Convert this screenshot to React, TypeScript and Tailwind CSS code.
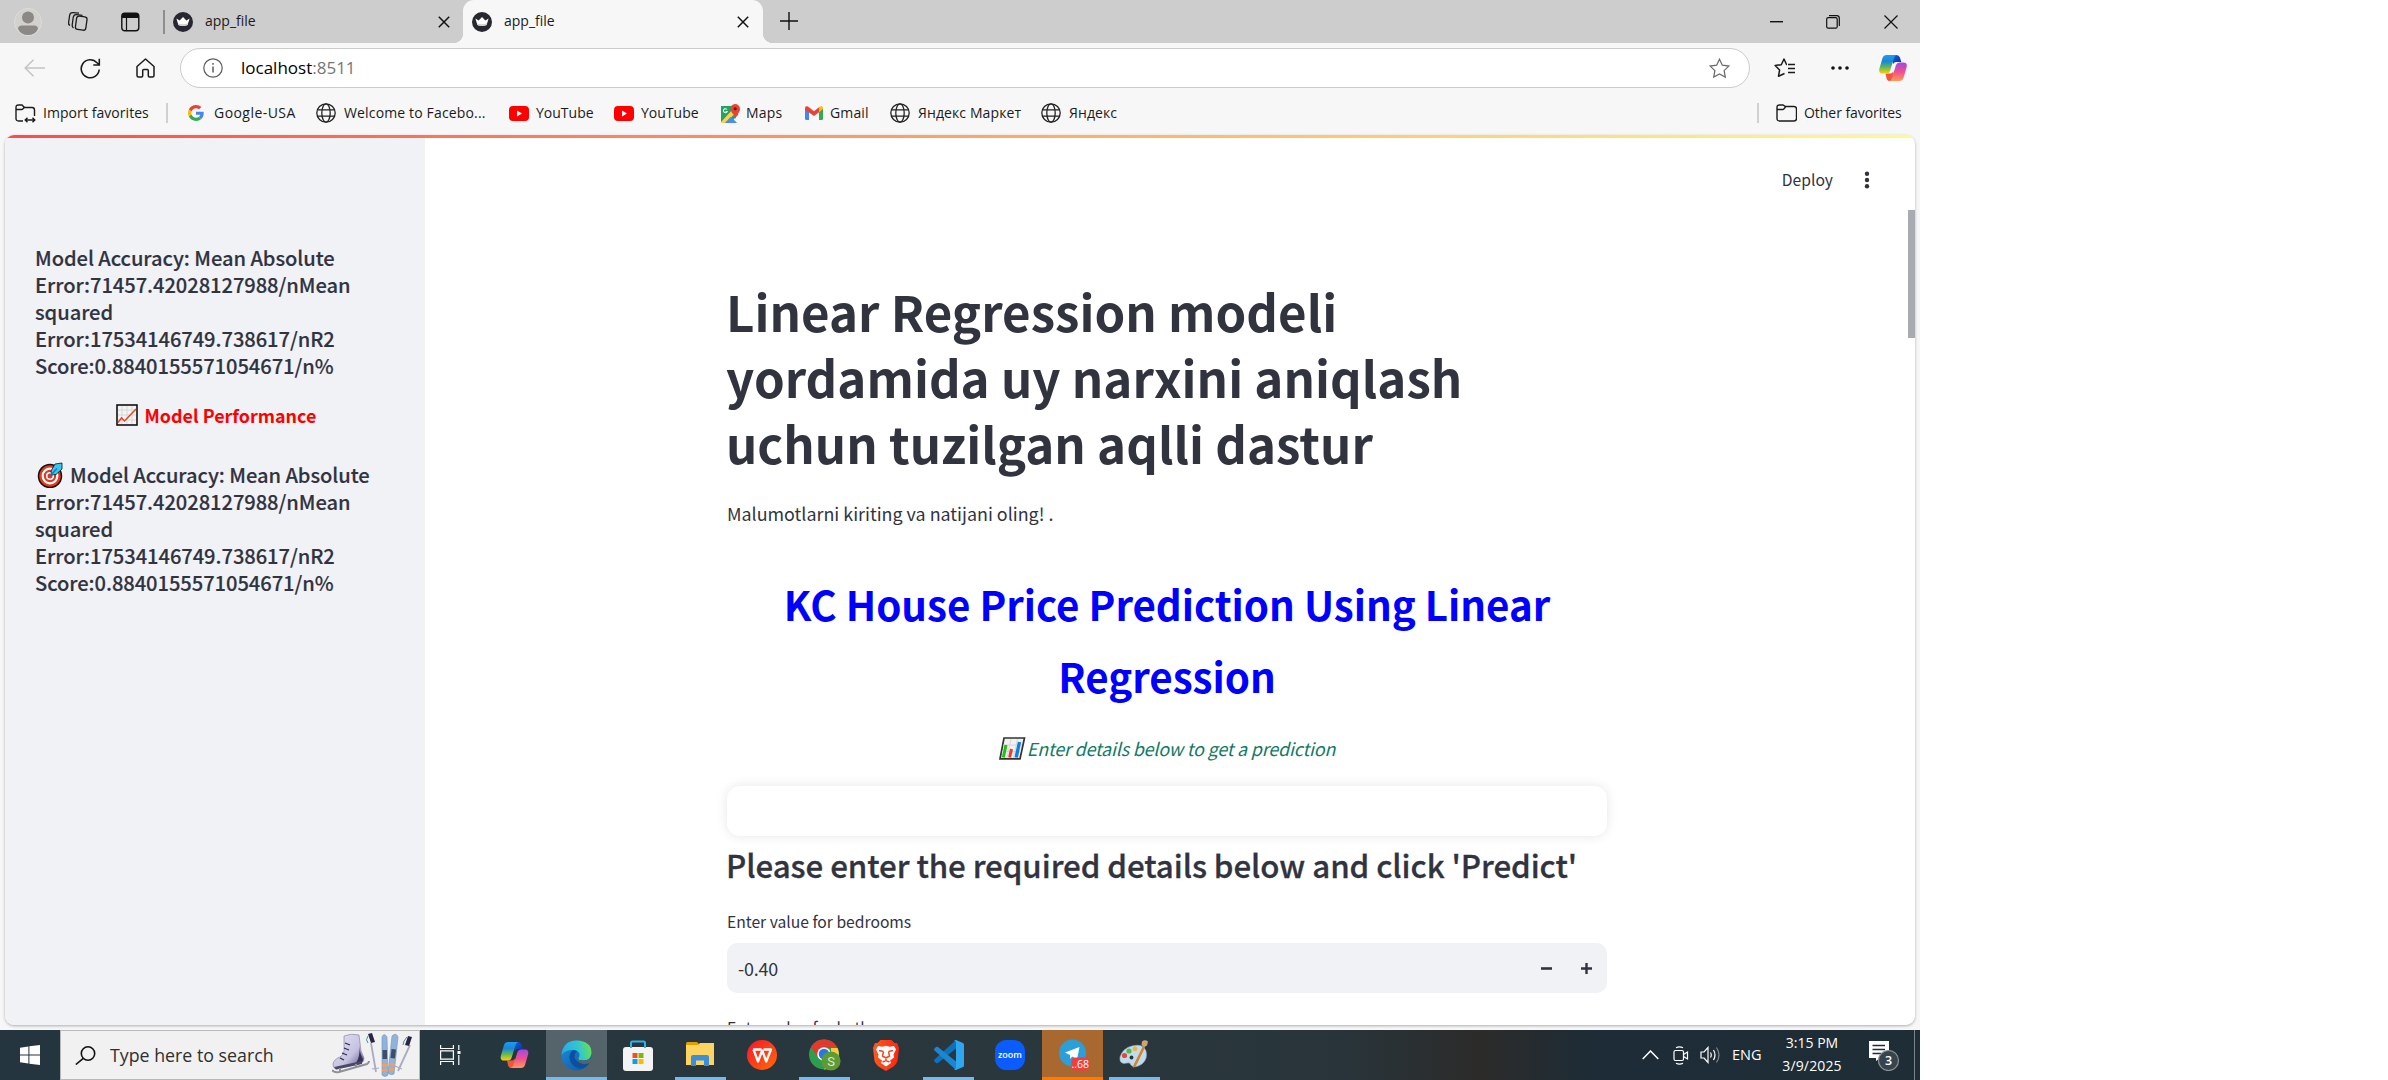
import type { ReactNode } from "react";

const ui = "font-['Open_Sans',sans-serif] text-[14px] leading-5 whitespace-nowrap text-[#1b1b1b]";

/* ---------- shared icons ---------- */

function Favicon() {
  return (
    <svg width="20" height="20" viewBox="0 0 20 20" className="shrink-0">
      <circle cx="10" cy="10" r="10" fill="#262730" />
      <path d="M3.4 6.6 6.6 8.6 10 5l3.4 3.6 3.2-2-2 6.4q-4.6 1.8-9.2 0z" fill="#fff" />
      <path d="M5.4 13q4.6 1.8 9.2 0l.6-1.8q-5.200 2-10.400 0z" fill="#cfcfd4" />
    </svg>
  );
}

function Globe() {
  return (
    <svg width="20" height="20" viewBox="0 0 20 20" fill="none" stroke="#222" strokeWidth="1.300" className="shrink-0">
      <circle cx="10" cy="10" r="9.200" />
      <ellipse cx="10" cy="10" rx="4.200" ry="9.200" />
      <path d="M1.500 6.800h17M1.500 13.200h17" />
    </svg>
  );
}

function YouTube() {
  return (
    <svg width="20" height="15" viewBox="0 0 20 15" className="shrink-0">
      <rect width="20" height="15" rx="4" fill="#f00" />
      <path d="M8 4.500v6l5-3z" fill="#fff" />
    </svg>
  );
}

function Folder({ arrows = false }: { arrows?: boolean }) {
  return (
    <svg width="21" height="20" viewBox="0 0 21 20" fill="none" stroke="#1b1b1b" strokeWidth="1.400" className="shrink-0">
      <path d={arrows ? "M8 18H3.500Q1 18 1 15.500V4.500Q1 2 3.500 2H7l2.500 2.500H17q2.500 0 2.500 2.500v6" : "M1 15.500V4.500Q1 2 3.500 2H7l2.500 1.500H18q2.500 0 2.500 2.500v9.500q0 2.500-2.500 2.500H3.500Q1 18 1 15.500z"} />
      <path d="M1 6.500h5.500q1 0 1.500-.7L9.500 4" />
      {arrows && <path d="M10.500 17h9M12.500 14.700 10.200 17l2.300 2.300M17.500 14.700l2.300 2.300-2.300 2.300" />}
    </svg>
  );
}

function Copilot({ w, h, id }: { w: number; h: number; id: string }) {
  return (
    <svg width={w} height={h} viewBox="0 0 28 26" className="shrink-0">
      <defs>
        <linearGradient id={id + "a"} x1="0" y1="0" x2="0" y2="1">
          <stop offset="0" stopColor="#1b9cf0" />
          <stop offset=".35" stopColor="#1a86d8" />
          <stop offset=".65" stopColor="#5cb85c" />
          <stop offset="1" stopColor="#ffd000" />
        </linearGradient>
        <linearGradient id={id + "b"} x1="0" y1="0" x2="0" y2="1">
          <stop offset="0" stopColor="#a04be0" />
          <stop offset=".5" stopColor="#ee4f92" />
          <stop offset="1" stopColor="#ff9a56" />
        </linearGradient>
        <linearGradient id={id + "c"} x1="0" y1="0" x2="1" y2="1">
          <stop offset="0" stopColor="#1560d8" />
          <stop offset="1" stopColor="#0a2fae" />
        </linearGradient>
      </defs>
      <path d="M13 0h4.500q2.700 0 3.500 2.800L22.300 7H17q-2 0-2.600 2L13 4z" fill={`url(#${id}c)`} />
      <path d="M6.500 18.500h5q2 0 2.500-2l1.500 5L14 26h-3q-2.800 0-3.500-2.800z" fill="#f2563a" />
      <path d="M7.500 0H18q-2 .3-2.800 2.800L11 16q-.8 2.500-3.500 2.500h-4Q-.5 18.500.3 14L3.500 3Q4.500 0 7.500 0z" fill={`url(#${id}a)`} />
      <path d="M20.500 26H10q2-.3 2.800-2.800L17 10q.8-2.500 3.500-2.500h4q4 0 3.200 4.500l-3.200 11q-1 3-4 3z" fill={`url(#${id}b)`} />
    </svg>
  );
}

/* ---------- browser chrome ---------- */

function CloseX() {
  return (
    <svg width="12" height="12" viewBox="0 0 12 12" stroke="#111" strokeWidth="1.500" className="shrink-0">
      <path d="M.8.8l10.400 10.400M11.200.8.8 11.200" />
    </svg>
  );
}

function TabBar() {
  return (
    <div className="flex h-[43px] items-center bg-[#cdcdcd]">
      <svg width="28" height="28" viewBox="0 0 28 28" className="ml-[14px]">
        <circle cx="14" cy="14" r="13.500" fill="#d3d1ce" stroke="#dedcd9" />
        <circle cx="14" cy="9.500" r="6" fill="#8b8885" />
        <path d="M4 21q0-3.500 4-3.500h12q4 0 4 3.500-3 6-10 6T4 21z" fill="#8b8885" />
      </svg>
      <svg width="22" height="21" viewBox="0 0 22 21" fill="none" stroke="#1b1b1b" strokeWidth="1.300" className="ml-[25px]">
        <rect x="9" y="5.500" width="10.500" height="13.500" rx="2.500" transform="rotate(8 15 12)" />
        <path d="M6.500 17Q5 16 5.200 14l1-7.500q.5-3 3.300-2.800l6 .6M3 14.500Q1.300 13.500 1.600 11.500l1-7Q3 1.500 6 1.700l6 .4" />
      </svg>
      <svg width="19" height="20" viewBox="0 0 19 20" className="ml-[32px]">
        <rect x=".8" y="1.300" width="17" height="17.500" rx="3" fill="none" stroke="#111" strokeWidth="1.400" />
        <path d="M1 6V4q0-3 3-3h11q3 0 3 3v2z" fill="#111" />
        <path d="M5.500 6v12.500" stroke="#111" strokeWidth="1.200" />
      </svg>
      <div className="ml-[23px] h-6 w-[2px] bg-[#8e8e8e]" />
      <div className="flex w-[298px] items-center pl-2">
        <Favicon />
        <span className={`${ui} ml-3 w-[233px] pb-px`}>app_file</span>
        <CloseX />
      </div>
      <div className="relative flex h-full w-[300px] items-center rounded-t-[11px] bg-[#f7f7f7] pl-[9px]">
        <div className="absolute -left-[10px] bottom-0 size-[10px] bg-[radial-gradient(circle_at_0_0,#cdcdcd_10px,#f7f7f7_10.5px)]" />
        <div className="absolute -right-[10px] bottom-0 size-[10px] bg-[radial-gradient(circle_at_100%_0,#cdcdcd_10px,#f7f7f7_10.5px)]" />
        <Favicon />
        <span className={`${ui} ml-3 w-[233px] pb-px`}>app_file</span>
        <CloseX />
      </div>
      <svg width="18" height="18" viewBox="0 0 18 18" stroke="#111" strokeWidth="1.400" className="mb-px ml-[17px]">
        <path d="M9 0v18M0 9h18" />
      </svg>
      <svg width="13" height="2" className="ml-auto mr-[43px]">
        <rect width="13" height="1.400" fill="#111" />
      </svg>
      <svg width="14" height="14" viewBox="0 0 14 14" fill="none" stroke="#111" strokeWidth="1.200" className="mr-[44px]">
        <rect x=".7" y="2.700" width="10.500" height="10.500" rx="1.500" />
        <path d="M3 .7h7.800q2.500 0 2.500 2.500V11" />
      </svg>
      <svg width="14" height="14" viewBox="0 0 14 14" stroke="#111" strokeWidth="1.200" className="mr-[22px]">
        <path d="M.5.5l13 13M13.500.5l-13 13" />
      </svg>
    </div>
  );
}

const star = "M10 1.200l2.700 5.700 6.200.8-4.500 4.300 1.100 6.200L10 15.200l-5.500 3 1.100-6.200L1.100 7.700l6.200-.8z";

function Toolbar() {
  return (
    <div className="flex h-[50px] items-center">
      <svg width="21" height="18" viewBox="0 0 21 18" fill="none" stroke="#c4c4c4" strokeWidth="1.500" className="ml-[24px]">
        <path d="M21 9H1M9.500.8 1.200 9l8.300 8.200" />
      </svg>
      <svg width="21" height="21" viewBox="0 0 21 21" fill="none" stroke="#1b1b1b" strokeWidth="1.600" className="ml-[35px]">
        <path d="M19.200 11.500A9 9 0 1 1 17 4.800l2 1.700M19.300.8V7h-6" />
      </svg>
      <svg width="19" height="20" viewBox="0 0 19 20" fill="none" stroke="#1b1b1b" strokeWidth="1.500" strokeLinejoin="round" className="ml-[35px]">
        <path d="M1 8.500 9.500 1 18 8.500V17.500q0 1.500-1.500 1.500h-3q-1.200 0-1.200-1.200V12.500q0-1-1-1H7.700q-1 0-1 1v5.300q0 1.200-1.200 1.200h-3Q1 19 1 17.500z" />
      </svg>
      <div className="ml-[25px] flex h-10 w-[1570px] items-center rounded-full border border-[#cbcbcb] bg-white">
        <svg width="20" height="20" viewBox="0 0 20 20" fill="none" stroke="#5c5c5c" strokeWidth="1.200" className="ml-[22px]">
          <circle cx="10" cy="10" r="9.200" />
          <path d="M10 8.500v6M10 5v1.800" strokeWidth="1.500" />
        </svg>
        <span className="ml-[18px] font-['Open_Sans',sans-serif] text-[17px] leading-6 whitespace-nowrap text-black">
          localhost<span className="text-[#767676]">:8511</span>
        </span>
        <svg width="21" height="21" viewBox="0 0 20 20" fill="none" stroke="#6b6b6b" strokeWidth="1.200" className="ml-auto mr-[19px]">
          <path d={star} />
        </svg>
      </div>
      <svg width="21" height="20" viewBox="0 0 21 20" fill="none" stroke="#1b1b1b" strokeWidth="1.500" className="ml-[24px]">
        <path d="M13 6.500 12.500 6.500 10 1 7.300 6.700l-6.200.8L5.600 12l-1.100 6.200L10.500 15.500M14 6.500h7M14 10.500h7M14 14.500h7" strokeLinejoin="round" />
      </svg>
      <svg width="18" height="4" viewBox="0 0 18 4" className="ml-[36px]" fill="#111">
        <circle cx="2" cy="2" r="1.800" />
        <circle cx="9" cy="2" r="1.800" />
        <circle cx="16" cy="2" r="1.800" />
      </svg>
      <div className="ml-[30px]">
        <Copilot w={28} h={26} id="tb" />
      </div>
    </div>
  );
}

function Bookmark({ icon, children, cls, gap = "w-7" }: { icon: ReactNode; children: ReactNode; cls: string; gap?: string }) {
  return (
    <div className={`flex shrink-0 items-center ${cls}`}>
      <div className={`flex shrink-0 ${gap}`}>{icon}</div>
      <span className="whitespace-nowrap">{children}</span>
    </div>
  );
}

function Bookmarks() {
  return (
    <div className={`flex h-[40px] items-center ${ui}`}>
      <Bookmark icon={<Folder arrows />} cls="ml-[15px] w-[151px] tracking-[0.06px]" gap="w-7">Import favorites</Bookmark>
      <div className="h-5 w-[2px] bg-[#d0d0d0]" />
      <Bookmark
        cls="ml-[20px] w-[128px] tracking-[0.45px]"
        gap="w-[26px]"
        icon={
          <svg width="16" height="16" viewBox="0 0 48 48">
            <path fill="#EA4335" d="M24 9.500c3.500 0 6.700 1.200 9.200 3.600l6.900-6.900C35.900 2.400 30.500 0 24 0 14.600 0 6.500 5.400 2.600 13.200l8 6.200C12.400 13.700 17.700 9.500 24 9.500z" />
            <path fill="#4285F4" d="M47 24.600c0-1.600-.2-3.100-.4-4.600H24v9h12.900c-.6 3-2.200 5.500-4.700 7.200l7.700 6C44.400 38 47 31.800 47 24.600z" />
            <path fill="#FBBC05" d="M10.500 28.600a14.500 14.500 0 0 1 0-9.200l-8-6.200a24 24 0 0 0 0 21.600z" />
            <path fill="#34A853" d="M24 48c6.500 0 11.900-2.100 15.900-5.800l-7.700-6c-2.200 1.400-4.900 2.300-8.200 2.300-6.300 0-11.600-4.200-13.500-9.900l-8 6.200C6.500 42.600 14.600 48 24 48z" />
          </svg>
        }
      >
        Google-USA
      </Bookmark>
      <Bookmark icon={<Globe />} cls="w-[193px] tracking-[0.15px]">Welcome to Facebo...</Bookmark>
      <Bookmark icon={<YouTube />} cls="w-[105px]" gap="w-[27px]">YouTube</Bookmark>
      <Bookmark icon={<YouTube />} cls="w-[107px]" gap="w-[27px]">YouTube</Bookmark>
      <Bookmark
        cls="w-[84px] tracking-[0.2px]"
        gap="w-[25px]"
        icon={
          <svg width="19" height="19" viewBox="0 0 19 19">
            <path d="M0 2h17v9L9 19H0z" fill="#1fa463" />
            <path d="M3 19 9 12l7 7z" fill="#4285f4" />
            <path d="M0 18 13 4l4 3L4 19H0z" fill="#ffd04b" />
            <path d="M4 19l5.500-6 6 6z" fill="#4c8bf5" />
            <path d="M14 0a5 5 0 0 1 5 5c0 3.500-3.500 5-4.500 10C13.500 10 9.500 8.500 9.500 5A4.700 4.700 0 0 1 14 0z" fill="#ea4335" />
            <circle cx="14.200" cy="4.800" r="1.600" fill="#811411" />
            <path d="M6 5.500A2 2 0 1 0 6.200 7.500H4.500" fill="none" stroke="#e8f5e9" strokeWidth="1.100" />
          </svg>
        }
      >
        Maps
      </Bookmark>
      <Bookmark
        cls="w-[85px] tracking-[0.15px]"
        gap="w-[25px]"
        icon={
          <svg width="18" height="14" viewBox="0 0 18 14">
            <path d="M0 2.500V12.500Q0 14 1.500 14H4V6z" fill="#4285f4" />
            <path d="M18 2.500V12.500Q18 14 16.500 14H14V6z" fill="#34a853" />
            <path d="M14 1.200 15 .5q3-1.300 3 2l-4 4z" fill="#fbbc04" />
            <path d="M0 2.500q0-3.300 3-2l6 4.700 5-4v5L9 10 4 6.500 0 3.500z" fill="#ea4335" />
          </svg>
        }
      >
        Gmail
      </Bookmark>
      <Bookmark icon={<Globe />} cls="w-[151px] tracking-[0.1px]">Яндекс Маркет</Bookmark>
      <Bookmark icon={<Globe />} cls="w-[80px] tracking-[0.1px]">Яндекс</Bookmark>
      <div className="ml-auto h-5 w-[2px] bg-[#d0d0d0]" />
      <Bookmark icon={<Folder />} cls="ml-[17px] w-[144px] tracking-[-0.05px]">Other favorites</Bookmark>
    </div>
  );
}

/* ---------- page content ---------- */

const src = "font-['Noto_Sans_CJK_SC',sans-serif] text-[#31333f]";

function Metrics({ icon }: { icon?: ReactNode }) {
  return (
    <div className="text-[20.14px] leading-[27px] font-medium tracking-[-0.06px] whitespace-nowrap [-webkit-text-stroke:0.15px_#31333f]">
      <div className="flex h-[27px] items-center">
        {icon}
        <span>Model Accuracy: Mean Absolute</span>
      </div>
      <div>Error:71457.42028127988/nMean</div>
      <div>squared</div>
      <div>Error:17534146749.738617/nR2</div>
      <div>Score:0.8840155571054671/n%</div>
    </div>
  );
}

function ChartUp() {
  return (
    <svg width="22" height="22" viewBox="0 0 22 22" className="mr-[7px] shrink-0" aria-label="📈">
      <rect x="1" y="1" width="20" height="20" fill="#f3f3f3" stroke="#111" strokeWidth="1.600" />
      <path d="M6 2v18M11 2v18M16 2v18M2 6h18M2 11h18M2 16h18" stroke="#d2d2d2" strokeWidth=".8" />
      <path d="M2 18.500 5.500 14l3 3L20 5" fill="none" stroke="#e8442a" strokeWidth="1.500" />
    </svg>
  );
}

function Target() {
  return (
    <svg width="26" height="26" viewBox="0 0 26 26" className="mr-[7px] ml-[2px] shrink-0" aria-label="🎯">
      <circle cx="13" cy="14" r="11.500" fill="#e8351c" stroke="#111" strokeWidth="1.500" />
      <circle cx="13" cy="14" r="7.300" fill="none" stroke="#fff" strokeWidth="2.200" />
      <circle cx="13" cy="14" r="3.300" fill="#e8351c" stroke="#fff" strokeWidth="1.600" />
      <path d="M14 9l4-7 7-1v6l-6 5.500-4.500.5z" fill="#35c8f0" stroke="#111" strokeWidth=".8" />
      <path d="M13 14 20 6.500" stroke="#0c7fd0" strokeWidth="1.600" />
    </svg>
  );
}

function BarChart() {
  return (
    <svg width="27" height="23" viewBox="0 0 27 23" className="mr-[1px] shrink-0" aria-label="📊">
      <path d="M5 1h20.500L21 21.800H1z" fill="#f1f1f1" stroke="#333" strokeWidth="1.700" />
      <path d="M12 2 8 21M18.500 2 14.500 21M4 8h19M3 14.500h19" stroke="#d0d0d0" strokeWidth=".8" />
      <path d="M7 8 4.300 20.500" stroke="#16c60c" strokeWidth="3" />
      <path d="M12.500 12 10.600 20.500" stroke="#f03a2e" strokeWidth="3" />
      <path d="M20.500 5 17.200 20.500" stroke="#0e7fe0" strokeWidth="3.400" />
    </svg>
  );
}

function Sidebar() {
  return (
    <aside className={`w-[420px] shrink-0 bg-[#f0f2f6] px-[30px] pt-[106px] ${src}`}>
      <Metrics />
      <div className="mt-[20px] flex h-8 items-center justify-center pl-[2px] text-[17.9px] leading-8 font-bold whitespace-nowrap text-[#ff0000]">
        <ChartUp />
        <span>Model Performance</span>
      </div>
      <div className="h-[30px]" />
      <Metrics icon={<Target />} />
    </aside>
  );
}

function Main() {
  return (
    <main className={`relative flex-1 ${src}`}>
      <div className="absolute top-[72px] right-0 h-[128px] w-[7px] bg-[#a9abb3]" />
      <header className="flex h-[84px] items-center justify-end pr-[45px] text-[15.66px] leading-6">
        <span>Deploy</span>
        <svg width="6" height="18" viewBox="0 0 6 18" fill="#31333f" className="ml-[31px]">
          <circle cx="3" cy="2.700" r="2.200" />
          <circle cx="3" cy="9" r="2.200" />
          <circle cx="3" cy="15.300" r="2.200" />
        </svg>
      </header>
      <div className="ml-[302px] w-[880px]">
        <h1 className="mt-[56px] -ml-[1px] text-[49.2px] leading-[66px] font-bold tracking-[0.04px] whitespace-nowrap">
          Linear Regression modeli
          <br />
          yordamida uy narxini aniqlash
          <br />
          uchun tuzilgan aqlli dastur
        </h1>
        <p className="mt-[21px] text-[17.9px] leading-8">Malumotlarni kiriting va natijani oling! .</p>
        <h2 className="mt-[39px] text-center text-[40.3px] leading-[72px] font-bold tracking-[-0.03px] text-[#0000ff]">
          KC House Price Prediction Using Linear
          <br />
          Regression
        </h2>
        <div className="mt-[20px] flex h-8 items-center justify-center text-[17.9px] leading-8 whitespace-nowrap text-[#117a65]">
          <BarChart />
          <span className="tracking-[-0.18px] italic">Enter details below to get a prediction</span>
        </div>
        <div className="mt-[22px] h-[50px] rounded-[13px] bg-white shadow-[0_0_12px_rgba(0,0,0,0.1)]" />
        <h3 className="mt-[8px] -ml-[1px] text-[31.3px] leading-[42px] font-medium tracking-[-0.07px] whitespace-nowrap [-webkit-text-stroke:0.3px_#31333f]">
          Please enter the required details below and click 'Predict'
        </h3>
        <div className="mt-[24px] text-[15.66px] leading-6">Enter value for bedrooms</div>
        <div className="mt-[9px] flex h-[50px] items-center rounded-[10px] bg-[#f0f2f6] pl-[11px] text-[17.9px]">
          <span className="leading-8 tracking-[-0.2px]">-0.40</span>
          <svg width="11" height="11" viewBox="0 0 11 11" className="ml-auto mr-[29px]" stroke="#31333f" strokeWidth="2.600">
            <path d="M0 5.500h11" />
          </svg>
          <svg width="11" height="11" viewBox="0 0 11 11" className="mr-[15px]" stroke="#31333f" strokeWidth="2.400">
            <path d="M0 5.500h11M5.500 0v11" />
          </svg>
        </div>
        <div className="mt-[23px] text-[15.66px] leading-6">Enter value for bathrooms</div>
      </div>
    </main>
  );
}

/* ---------- taskbar ---------- */

function Cell({ cls, bar, children }: { cls: string; bar?: string; children: ReactNode }) {
  return (
    <div className={`relative flex h-full shrink-0 items-center justify-center ${cls}`}>
      {children}
      {bar && <div className={`absolute bottom-0 h-[3px] ${bar}`} />}
    </div>
  );
}

function Skates() {
  return (
    <svg width="80" height="44" viewBox="0 0 80 44" className="shrink-0">
      <defs>
        <linearGradient id="boot" x1="0" y1="0" x2="1" y2="1">
          <stop offset="0" stopColor="#e6e4f6" />
          <stop offset=".6" stopColor="#c5c2e0" />
          <stop offset="1" stopColor="#4d4775" />
        </linearGradient>
      </defs>
      <path d="M12 3q7-3 15-1l1 8q0 8 4 15 0 5-5 6L5 36q-4 0-4-5 1-5 7-7 5-3 4-10z" fill="url(#boot)" stroke="#7a76a0" strokeWidth=".6" />
      <path d="M27 12q1 9 4 14 0 4-4 5l-4 .6q6-8 4-19.600z" fill="#37305c" />
      <path d="M2 34 30 28v3L4 36.500z" fill="#4b4768" />
      <path d="M0 37q2 3 7 2l28-8q2-1 2-3" fill="none" stroke="#8d9296" strokeWidth="2" />
      <path d="M8 35v4M24 31v4" stroke="#8d9296" strokeWidth="2" />
      <path d="M13 10l5 2M12 15l5 2M10 20l5 2M8 25l4 2" stroke="#2c2850" strokeWidth="1.300" />
      <g stroke="#a9abc4" strokeWidth="1.800">
        <path d="M39 10 44 39M78 12 66 38" />
        <path d="M40 36l7-1M63 33l7 3" strokeWidth="1.200" />
      </g>
      <path d="M36 1l4-1 3 9-4 1zM76 3l4 1-3 9-4-1z" fill="#2b2545" />
      <path d="M36 3q-3 4 0 7M75 4q-4 4-4 8" fill="none" stroke="#4a8c93" />
      <path d="M50 4q2-5 5 0l1 38q-3 3-6 0zM60 3q4-4 6 1l-4 37q-3 2-6-1z" fill="#8fb3d9" stroke="#6e93bd" strokeWidth=".6" />
      <path d="M50.500 17h4.500v9h-4.500zM59.500 16l4.500.5-1 9-4.500-.5z" fill="#3f4d66" />
      <path d="M50 31h6v2.500h-6zM50 36h6v2.500h-6zM57.500 30l5.500.6-.3 2.500-5.500-.6zM57 35l5.500.6-.3 2.500-5.500-.6z" fill="#ff9c50" />
    </svg>
  );
}

function Taskbar() {
  return (
    <div className="flex h-[50px] items-stretch bg-[linear-gradient(90deg,#25353f_0%,#26363e_25%,#2a383d_55%,#28343a_70%,#2c2b2a_77%,#1d2c36_83%,#1f2d36_100%)]">
      <Cell cls="w-[60px]">
        <svg width="20" height="20" viewBox="0 0 20 20" fill="#fff">
          <path d="M0 2.700 8.400 1.500v8H0zM9.400 1.300 20 0v9.500H9.400zM0 10.500h8.400v8L0 17.300zM9.400 10.500H20V20L9.400 18.700z" />
        </svg>
      </Cell>
      <div className="flex w-[360px] shrink-0 items-center border border-[#b8b8b8] bg-[#f1f1f1]">
        <svg width="21" height="19" viewBox="0 0 21 19" fill="none" stroke="#111" strokeWidth="1.600" className="ml-[14px]">
          <circle cx="13" cy="7.500" r="6.700" />
          <path d="M8.300 12.300.8 18.500" />
        </svg>
        <span className="ml-[14px] font-['Open_Sans',sans-serif] text-[17.8px] leading-6 whitespace-nowrap text-[#2f2f2f]">Type here to search</span>
        <div className="ml-auto mr-[7px]">
          <Skates />
        </div>
      </div>
      <Cell cls="w-[60px]">
        <svg width="21" height="20" viewBox="0 0 21 20" fill="none" stroke="#fff" strokeWidth="1.200">
          <path d="M.6 0v3.500h12.800V0M.6 20v-3.500h12.800V20M.6 5.800h12.800v8.400H.6zM18.800 0v5M18.800 10v10" />
          <rect x="17.500" y="6" width="3" height="3" fill="#fff" stroke="none" />
        </svg>
      </Cell>
      <Cell cls="w-[66px] pl-[2px]">
        <Copilot w={29} h={26} id="tk" />
      </Cell>
      <Cell cls="w-[61px] bg-[#55636b]" bar="inset-x-0 bg-[#76b9ed]">
        <svg width="31" height="31" viewBox="0 0 31 31">
          <defs>
            <linearGradient id="ea" x1="0" y1=".5" x2="1" y2=".3">
              <stop offset="0" stopColor="#2aa9e6" />
              <stop offset=".55" stopColor="#30c5d0" />
              <stop offset="1" stopColor="#66e352" />
            </linearGradient>
            <linearGradient id="eb" x1="0" y1="0" x2="1" y2="1">
              <stop offset="0" stopColor="#1c8fdc" />
              <stop offset="1" stopColor="#0a54a4" />
            </linearGradient>
          </defs>
          <circle cx="15.500" cy="15.500" r="15" fill="url(#eb)" />
          <path d="M.5 15Q2 .5 15.500.5 30.500 1 30.500 13q-.5 7.500-8 7.500-6 0-5-2.500 1.500-1.500 1-4-1.500-4-6.500-4Q3.500 10 .5 15z" fill="url(#ea)" />
          <path d="M17.500 18q-1 2.500 5 2.500 3.500 0 5.500-1.500l3-1.500-1 6.500-2 1-8-.5-4.500-4z" fill="#55636b" />
          <path d="M12 10q-4 3-3.500 8.500 1.500 8.500 10.500 10 6-.5 9.500-5.500-5 2-9.500 0-7-3-5-9 .7-1.700 2.500-2.500-2-1.500-4.500-1.500z" fill="#0c4f9c" />
        </svg>
      </Cell>
      <Cell cls="w-[61px]">
        <svg width="30" height="31" viewBox="0 0 30 31">
          <rect y="7" width="30" height="24" rx="3" fill="#f3f3f3" />
          <path d="M8 8V3q0-1.500 1.500-1.500h11Q22 1.500 22 3v5" fill="none" stroke="#2bb5ea" strokeWidth="2" />
          <path d="M9.500 13h5v5h-5z" fill="#f25022" />
          <path d="M15.500 13h5v5h-5z" fill="#7fba00" />
          <path d="M9.500 19h5v5h-5z" fill="#00a4ef" />
          <path d="M15.500 19h5v5h-5z" fill="#ffb900" />
        </svg>
      </Cell>
      <Cell cls="ml-px w-[62px] pb-[1px]" bar="left-[6px] w-[51px] bg-[#76b9ed]">
        <svg width="28" height="25" viewBox="0 0 28 25">
          <path d="M0 1.500Q0 0 1.500 0H11l3 3H0z" fill="#e0a100" />
          <path d="M0 3h12l2-2h14v22H0z" fill="#fcd462" />
          <path d="M5 24V15q0-2 2-2h14q2 0 2 2v9h-5v-5.500h-8V24z" fill="#3c8fd6" />
        </svg>
      </Cell>
      <Cell cls="w-[62px]">
        <svg width="30" height="30" viewBox="0 0 30 30">
          <defs>
            <linearGradient id="wp" x1="0" y1="0" x2="1" y2="1">
              <stop offset="0" stopColor="#f9142a" />
              <stop offset="1" stopColor="#ff6a08" />
            </linearGradient>
          </defs>
          <circle cx="15" cy="15" r="15" fill="url(#wp)" />
          <path d="M6 9.500h8.500M6.500 9.500 11 21.500l4.200-11 4 11 4.800-12h-7.500M16.500 9.500h7.800" fill="none" stroke="#fff" strokeWidth="2.300" strokeLinejoin="round" />
        </svg>
      </Cell>
      <Cell cls="w-[62px] pl-px" bar="left-[6px] w-[51px] bg-[#76b9ed]">
        <svg width="32" height="32" viewBox="0 0 32 32">
          <circle cx="15" cy="15.500" r="15" fill="#2e9e4e" />
          <path d="M2 8A15 15 0 0 1 28.500 9H15.500l-6 10z" fill="#df3a2c" />
          <path d="M28.500 9A15 15 0 0 1 15 30.500L22 18V9z" fill="#fccb3d" />
          <circle cx="15" cy="15" r="6.800" fill="#fff" />
          <circle cx="15" cy="15" r="5.300" fill="#2a76e4" />
          <circle cx="22" cy="22" r="9.600" fill="#5e9b35" />
          <text x="22" y="27" textAnchor="middle" fill="#dce8d0" className="font-['Roboto',sans-serif] text-[13px]">S</text>
        </svg>
      </Cell>
      <Cell cls="w-[62px]">
        <svg width="26" height="31" viewBox="0 0 26 31">
          <defs>
            <linearGradient id="br" x1="0" y1="0" x2="1" y2="0">
              <stop offset="0" stopColor="#ff5a1f" />
              <stop offset="1" stopColor="#ff2410" />
            </linearGradient>
          </defs>
          <path d="M7.500 0h11l3 3L24 3l2 5-1.500 13q-1 3-4 5.500L13 31l-7.500-4.500Q2.500 24 1.500 21L0 8l2-5 2.500 0z" fill="url(#br)" />
          <path d="M5 6l4 .8 4-1 4 1 4-.8 2 3.500-2.500 5 .5 3-4 3 1 2.500-5 3.500L8 23l1-2.500-4-3 .5-3L3 9.500z" fill="#fff" />
          <path d="M6 10.500l4.500 1M20 10.500l-4.500 1M10.500 11.500 9.500 16l3.500 2 3.500-2-1-4.500M13 18v2.500M9.500 22 13 20.500l3.500 1.500" fill="none" stroke="#f4421f" strokeWidth="1.500" />
        </svg>
      </Cell>
      <Cell cls="w-[62px] pl-px" bar="left-[6px] w-[51px] bg-[#76b9ed]">
        <svg width="30" height="30" viewBox="0 0 30 30">
          <path d="M22 0v8.500L4 23q-1.200.7-2 0L.5 21.500q-.8-1 0-2z" fill="#0d72bd" />
          <path d="M22 30v-8.500L4 7Q2.800 6.300 2 7L.5 8.500q-.8 1 0 2z" fill="#1b86d2" />
          <path d="M22 0l7 3q1 .5 1 1.500v21q0 1-1 1.500l-7 3q-1.500 0-2-1 2 .5 2-2V3q0-2.500-2-2 .5-1 2-1z" fill="#2ea6f0" />
        </svg>
      </Cell>
      <Cell cls="w-[63px] pr-[2px]">
        <svg width="30" height="30" viewBox="0 0 30 30">
          <rect width="30" height="30" rx="11.500" fill="#0b5cff" />
          <text x="15" y="17.800" textAnchor="middle" fill="#fff" className="font-['Open_Sans',sans-serif] text-[9px] font-semibold">zoom</text>
        </svg>
      </Cell>
      <Cell cls="w-[61px] bg-[#a96830]" bar="inset-x-0 bg-[#ff7800]">
        <svg width="30" height="32" viewBox="0 0 30 32" className="ml-[2px]">
          <circle cx="13.500" cy="14" r="13.500" fill="#2a9fd8" />
          <path d="M6 13.500 20.500 8 18 20.500l-4.500-3-2.500 2.300V16z" fill="#fff" />
          <rect x="12.500" y="18.500" width="17.500" height="13" rx="4" fill="#f03d3d" />
          <text x="21.300" y="28.800" textAnchor="middle" fill="#fff" className="font-['Open_Sans',sans-serif] text-[10.500px]">..68</text>
        </svg>
      </Cell>
      <Cell cls="w-[62px]" bar="left-[6px] w-[51px] bg-[#76b9ed]">
        <svg width="30" height="30" viewBox="0 0 30 30">
          <path d="M13 6q11-3 14 5 2 8-4 13-8 5-11 1-1-3-4-2Q0 25 1 17 4 8 13 6z" fill="#bfdcee" stroke="#8fb4cc" strokeWidth=".6" />
          <circle cx="5.500" cy="15.500" r="2.600" fill="#e2493c" />
          <circle cx="10" cy="11" r="2.600" fill="#57b847" />
          <circle cx="16" cy="8.800" r="2.400" fill="#f6b12e" />
          <circle cx="12.500" cy="17.500" r="1.900" fill="#26353d" />
          <path d="M14 28q0-3 2-6L24 6l2 1.500L18.500 23q-1 3-4.500 5z" fill="#d9822b" />
          <path d="M22.500 5 23 1.500q3-2.500 6 0L28 5.500l-3 1.800z" fill="#cda572" />
        </svg>
      </Cell>
      <div className="ml-auto flex items-center text-white">
        <svg width="17" height="10" viewBox="0 0 17 10" fill="none" stroke="#fff" strokeWidth="1.500">
          <path d="M.7 9 8.500 1l7.800 8" />
        </svg>
        <svg width="16" height="19" viewBox="0 0 16 19" fill="none" stroke="#fff" strokeWidth="1.200" className="ml-[14px]">
          <rect x="1" y="4.500" width="9.500" height="10" rx="1.500" />
          <path d="M10.500 8.500l4-2.500v7l-4-2.500M3 1.800q3.500-1.800 7 0M3 17.200q3.500 1.800 7 0" />
        </svg>
        <svg width="21" height="18" viewBox="0 0 21 18" fill="none" stroke="#fff" strokeWidth="1.200" className="ml-[11px]">
          <path d="M1 6h3l4-4.500v15L4 12H1zM10.500 6.500q1.500 2.500 0 5M13.500 4q3 5 0 10" />
          <path d="M16.500 1.500q5 7.500 0 15" stroke="#7f888d" />
        </svg>
        <span className="ml-[11px] w-[49px] font-['Open_Sans',sans-serif] text-[14.5px] leading-5">ENG</span>
        <div className="w-[62px] pb-[2px] text-center font-['Open_Sans',sans-serif] text-[14px] leading-[23px] whitespace-nowrap">
          <div>3:15 PM</div>
          <div className="tracking-[0.15px]">3/9/2025</div>
        </div>
        <svg width="32" height="32" viewBox="0 0 32 32" className="ml-[25px]">
          <path d="M1 2h20v17H12l-4 3v-3H1z" fill="#fff" />
          <path d="M4.500 6.500h12.500M4.500 10.500h12.500M4.500 14.500h9" stroke="#1f2d36" strokeWidth="1.300" />
          <circle cx="20.500" cy="21.500" r="10" fill="#38444b" stroke="#8b9296" strokeWidth="1.200" />
          <text x="20.500" y="26" textAnchor="middle" fill="#fff" className="font-['Open_Sans',sans-serif] text-[12.500px] font-semibold">3</text>
        </svg>
        <div className="ml-[14px] h-[50px] w-px bg-[#7b858b]" />
        <div className="w-[5px]" />
      </div>
    </div>
  );
}

export default function App() {
  return (
    <div className="h-[1080px] w-full overflow-hidden bg-white">
      <div className="flex h-full w-[1920px] flex-col bg-[#f7f7f7]">
        <TabBar />
        <Toolbar />
        <Bookmarks />
        <div className="mx-[5px] mt-[2px] mb-[5px] flex h-[890px] flex-col overflow-hidden rounded-[9px] bg-white shadow-[0_1px_3px_rgba(0,0,0,0.3)]">
          <div className="h-[3px] shrink-0 bg-[linear-gradient(90deg,#ff4b4b,#fffd80)]" />
          <div className="flex h-[887px] shrink-0">
            <Sidebar />
            <Main />
          </div>
        </div>
        <Taskbar />
      </div>
    </div>
  );
}
